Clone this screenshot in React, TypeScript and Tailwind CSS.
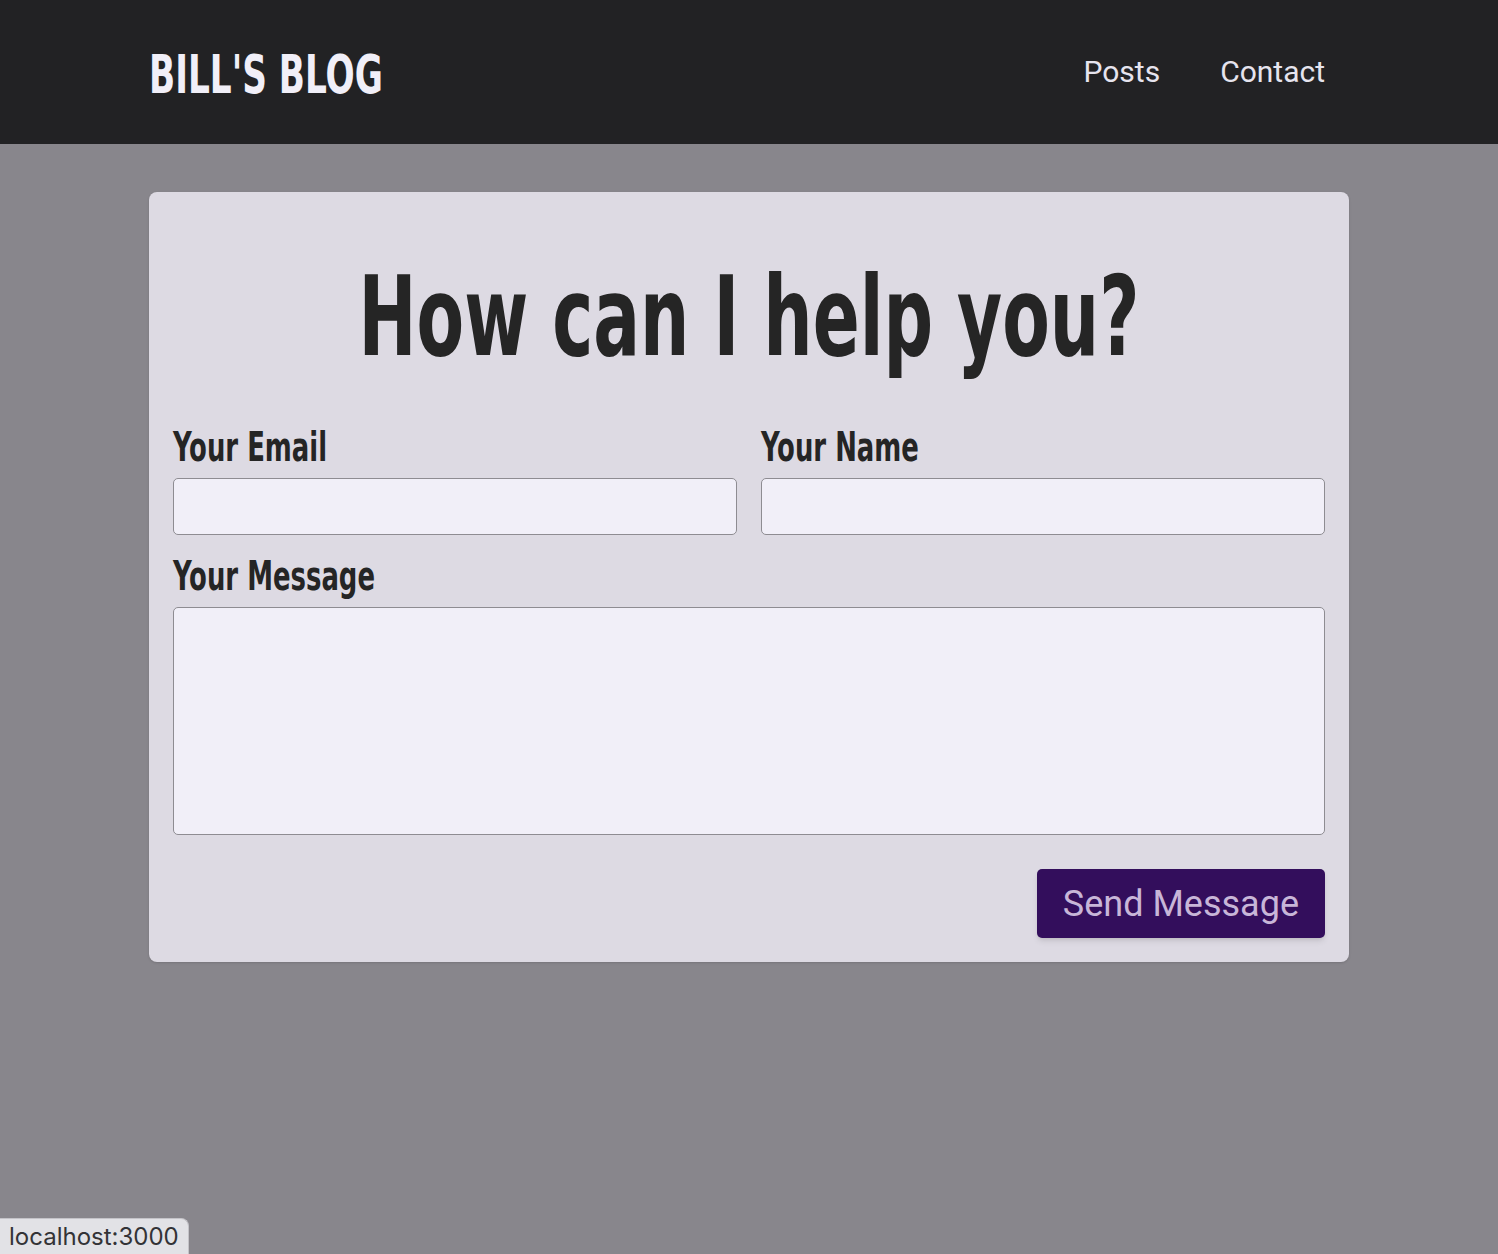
import React from "react";

// Oswald isn't available offline, so the condensed display face is faked with a horizontal squeeze
const display = "font-['DejaVu_Sans_Condensed','DejaVu_Sans',sans-serif] font-bold";
const body = "font-['Roboto','Liberation_Sans',sans-serif]";

const Header: React.FC = () => (
  <header className="h-[144px] bg-[#222224]">
    <div className="mx-auto flex h-full w-[1200px] items-center justify-between">
      <a
        href="#"
        className={`${display} mt-[4px] inline-block origin-left scale-x-[0.72] whitespace-nowrap text-[53px] leading-none text-[#f1eff8]`}
      >
        BILL'S BLOG
      </a>
      <nav className={`${body} flex items-center gap-[60px] pr-6 text-[30px] leading-none text-[#e6e4ee]`}>
        <a href="#">Posts</a>
        <a href="#">Contact</a>
      </nav>
    </div>
  </header>
);

const Label: React.FC<{ htmlFor: string; children: React.ReactNode }> = ({ htmlFor, children }) => (
  <label
    htmlFor={htmlFor}
    className={`${display} mb-[9px] block origin-left scale-x-[0.72] whitespace-nowrap text-[40px] leading-[44px] text-[#252525]`}
  >
    {children}
  </label>
);

const Field: React.FC<{ label: string; id: string; type?: string }> = ({ label, id, type = "text" }) => (
  <div className="flex flex-col">
    <Label htmlFor={id}>{label}</Label>
    <input
      id={id}
      type={type}
      className="h-[57px] rounded-[5px] border border-[#8e8c92] bg-[#f1eff8] px-3 outline-none"
    />
  </div>
);

export default function App() {
  return (
    <div className="min-h-screen bg-[#88868c]">
      <Header />

      <main className="pt-12">
        <form className="mx-auto w-[1200px] rounded-lg bg-[#dddae3] p-6 shadow-sm">
          <h1
            className={`${display} mt-[46px] scale-x-[0.70] whitespace-nowrap text-center text-[110px] leading-none text-[#252525]`}
          >
            How can I help you?
          </h1>

          <div className="mt-[53px] grid grid-cols-2 gap-6">
            <Field label="Your Email" id="email" type="email" />
            <Field label="Your Name" id="name" />
          </div>

          <div className="mt-[19px] flex flex-col">
            <Label htmlFor="message">Your Message</Label>
            <textarea
              id="message"
              className="h-[228px] resize-none rounded-[5px] border border-[#8e8c92] bg-[#f1eff8] p-3 outline-none"
            />
          </div>

          <div className="mt-[34px] flex justify-end">
            <button
              type="button"
              className={`${body} h-[69px] rounded-[5px] bg-[#330e5c] px-[26px] text-[36px] text-[#c8b6d8] shadow-md`}
            >
              Send Message
            </button>
          </div>
        </form>
      </main>

      <div className="fixed bottom-0 left-0 flex h-[36px] items-center rounded-tr-lg border-t border-r border-[#c4c3c8] bg-[#e2e2e6] px-[9px] font-['Inter','Liberation_Sans',sans-serif] text-[24px] text-[#333336]">
        localhost:3000
      </div>
    </div>
  );
}
